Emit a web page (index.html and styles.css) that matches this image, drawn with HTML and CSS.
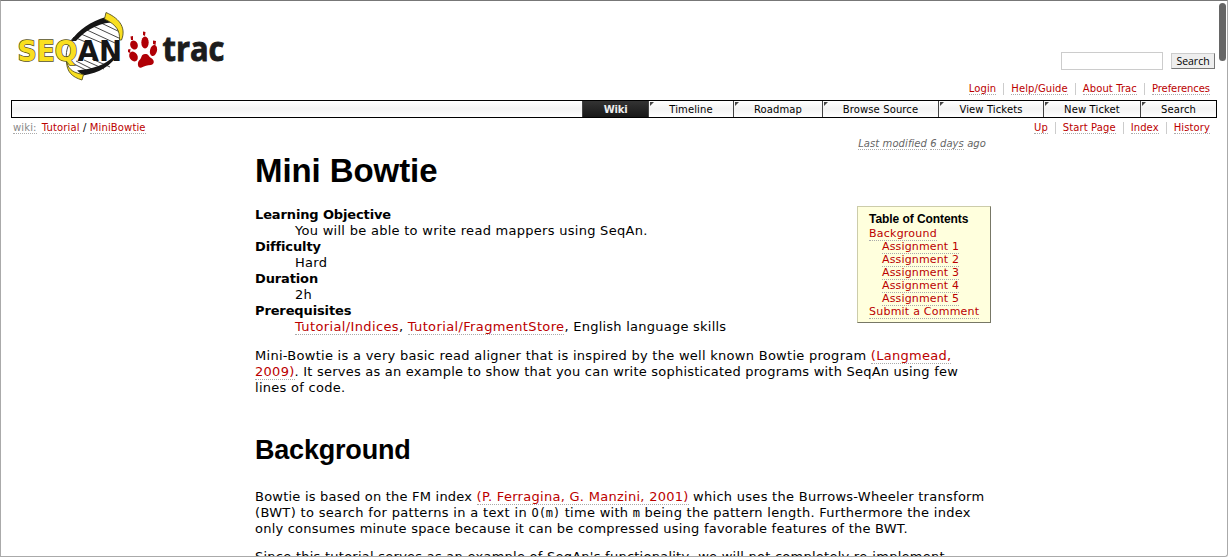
FILE: index.html
```html
<!DOCTYPE html>
<html lang="en">
<head>
<meta charset="utf-8">
<title>Mini Bowtie</title>
<link rel="stylesheet" href="styles.css">
</head>
<body>
<div class="window">
  <header class="header">
    <svg class="logo" width="210" height="72" viewBox="16 10 210 72" role="img" aria-label="SeqAn trac">
      <g stroke="#333" stroke-width=".9" fill="none">
        <path d="M99 22L120 32M93 26L121 39M87 30L115 43M81 34L102 43M76 38L88 43M84 60L104 69M76 61L96 71M70 62L86 70M92 59L110 67"/>
        <path d="M74 37C67 44 65 54 67 62"/>
      </g>
      <path d="M106 17C91 21 78 30 71 41L76 41C84 32 95 24 111 22.500Z" fill="#161616"/>
      <path d="M77 70.500C92 69 105 65 113 57L119 52C112 66 99 73 83 75.500Z" fill="#161616"/>
      <path d="M106 12.500C121 19 126 29 121.500 40L119.500 40C120 31 117 25 104.500 19Z" fill="#f9df20" stroke="#555020" stroke-width=".9"/>
      <path d="M67 63C69 70 74 73 83.500 74.500L82 80C72 77 67 72 66.500 62Z" fill="#f9df20" stroke="#555020" stroke-width=".9"/>
      <text class="seq" x="17.500" y="61" textLength="60" lengthAdjust="spacingAndGlyphs">SEQ</text>
      <text class="an" x="77.500" y="61" textLength="44.500" lengthAdjust="spacingAndGlyphs">AN</text>
      <g fill="#b00006">
        <ellipse cx="134" cy="45" rx="3.700" ry="4.700" transform="rotate(-22 134 45)"/>
        <ellipse cx="145" cy="42.500" rx="3.700" ry="6"/>
        <ellipse cx="153.500" cy="50.500" rx="3.500" ry="5.600" transform="rotate(14 153.500 50.500)"/>
        <ellipse cx="133.500" cy="56.500" rx="4" ry="5.200" transform="rotate(-30 133.500 56.500)"/>
        <path d="M145 54C141 54 142 58 139.500 60C136.500 63 138 69 141.500 67.500C145 66 147 65 151 65C155 64 154.500 60 151 58C148 56 149 54 145 54Z"/>
        <path d="M130.500 36.500L133 36L133 40L131 40ZM143 31.500L145.500 32L145 36L143 35ZM153 40.500L156 41L155.500 45L153 44ZM128 49.500L130.500 49L130 53L128 52Z"/>
      </g>
      <text class="trac" x="162.500" y="61" textLength="62" lengthAdjust="spacingAndGlyphs">trac</text>
    </svg>
    <form class="search">
      <input class="search-field" type="text" aria-label="Search">
      <button class="search-button" type="button">Search</button>
    </form>
    <ul class="links meta">
      <li><a>Login</a></li><li><a>Help/Guide</a></li><li><a>About Trac</a></li><li class="prefs"><a>Preferences</a></li>
    </ul>
  </header>
  <nav class="mainnav">
    <a class="tab active">Wiki</a><a class="tab timeline">Timeline</a><a class="tab roadmap">Roadmap</a><a class="tab browse">Browse Source</a><a class="tab tickets">View Tickets</a><a class="tab new">New Ticket</a><a class="tab find">Search</a>
  </nav>
  <div class="context">
    <div class="path"><a class="first">wiki:</a> <a>Tutorial</a> / <a>MiniBowtie</a></div>
    <ul class="links">
      <li><a>Up</a></li><li><a>Start Page</a></li><li><a>Index</a></li><li><a>History</a></li>
    </ul>
  </div>
  <main class="content">
    <div class="modified"><a>Last modified</a> <a>6 days</a> ago</div>
    <h1>Mini Bowtie</h1>
    <div class="intro">
      <dl>
        <dt>Learning Objective</dt><dd>You will be able to write read mappers using SeqAn.</dd>
        <dt>Difficulty</dt><dd>Hard</dd>
        <dt>Duration</dt><dd>2h</dd>
        <dt>Prerequisites</dt><dd class="wide"><a>Tutorial/Indices</a>, <a>Tutorial/FragmentStore</a>, English language skills</dd>
      </dl>
      <aside class="toc">
        <h4>Table of Contents</h4>
        <ul>
          <li><a>Background</a></li>
          <li class="sub"><a>Assignment 1</a></li>
          <li class="sub"><a>Assignment 2</a></li>
          <li class="sub"><a>Assignment 3</a></li>
          <li class="sub"><a>Assignment 4</a></li>
          <li class="sub"><a>Assignment 5</a></li>
          <li><a>Submit a Comment</a></li>
        </ul>
      </aside>
    </div>
    <p class="summary">Mini-Bowtie is a very basic read aligner that is inspired by the well known Bowtie program <a>(Langmead,<br>2009)</a><span class="snug">. It serves as an example to show that you can write sophisticated programs with SeqAn using few</span><br>lines of code.</p>
    <h2>Background</h2>
    <p><span class="snug">Bowtie is based on the FM index </span><a>(P. Ferragina, G. Manzini, 2001)</a> which uses the Burrows-Wheeler transform<br><span class="open">(BWT) to search for patterns in a text in </span><code>O(m)</code> time with <code>m</code> being the pattern length. Furthermore the index<br><span class="snug">only consumes minute space because it can be compressed using favorable features of the BWT.</span></p>
    <p class="last">Since this tutorial serves as an example of SeqAn's functionality, we will not completely re-implement</p>
  </main>
  <div class="scrollbar"></div>
</div>
</body>
</html>
```
FILE: styles.css
```css
* { box-sizing: border-box; }
body { margin: 0; background: #fff; color: #000; font-family: Verdana, "DejaVu Sans", sans-serif; font-size: 13px; }
.window { position: relative; height: 557px; overflow: hidden; padding: 0 10px; border: 1px solid #aaa; border-top-color: #777; border-radius: 0 0 3px 0; }
a { color: #b00; border-bottom: 1px dotted #aaa; }
ul { list-style: none; margin: 0; padding: 0; }

.header { display: grid; grid-template-columns: 1fr auto; grid-template-rows: 80px 19px; height: 99px; }
.logo { margin: 9px 0 0 5px; overflow: visible; }
.seq, .an { font: bold 29px "DejaVu Sans", sans-serif; }
.seq { fill: #f9df20; stroke: #555020; stroke-width: 1.5px; paint-order: stroke; }
.an { fill: #161616; }
.trac { font: bold 34px "Open Sans", "Noto Sans", sans-serif; fill: #1c1c1c; stroke: #1c1c1c; stroke-width: .9px; }
.search { display: flex; gap: 8px; margin: 51px 2px 0 0; justify-self: end; }
.search-field { width: 102px; height: 18px; padding: 0; border: 1px solid #ccc; }
.search-button { width: 44px; height: 16px; margin-top: 1px; padding: 0; background: #eee; border: 1px solid; border-color: #ccc #777 #777 #ccc; color: #000; font: 10.500px/13px "Open Sans", sans-serif; }
.links { display: flex; font-size: 10px; line-height: 12px; letter-spacing: .1px; }
.links li { padding: 0 7px; border-left: 1px solid #ccc; height: 12px; white-space: nowrap; }
.links li:first-child { border-left: 0; }
.meta { grid-column: 2; justify-self: end; margin-top: 2px; }
.links .prefs { letter-spacing: -.07px; }

.mainnav { display: flex; justify-content: flex-end; height: 18px; width: 1206px; border: 1px solid #000; background: linear-gradient(#fff, #f3f3f3 50%, #fff); }
.tab { position: relative; flex: none; height: 16px; border: 0; border-left: 1px solid #444; color: #000; font-size: 10px; line-height: 17px; text-align: center; letter-spacing: .12px; }
.tab::before { content: ""; position: absolute; left: 1px; top: 1px; border-top: 4px solid #444; border-right: 4px solid transparent; }
.active { width: 66px; background: linear-gradient(#333, #181818); color: #eee; font-weight: bold; letter-spacing: -.2px; }
.active::before { display: none; }
.timeline { width: 85px; }
.roadmap { width: 89px; }
.browse { width: 116px; }
.tickets { width: 105px; }
.new { width: 97px; }
.find { width: 76px; }

.context { display: flex; justify-content: space-between; padding-top: 4px; height: 20px; font-size: 10px; line-height: 12px; }
.path { padding-left: 2px; letter-spacing: .13px; }
.path .first { color: #888; margin-right: 2px; }

.content { width: 736px; margin-left: 244px; white-space: nowrap; letter-spacing: .28px; }
.modified { height: 13px; padding-right: 5px; color: #666; font: italic 10px/12px Verdana, "DejaVu Sans", sans-serif; letter-spacing: .08px; text-align: right; }
.modified a { color: inherit; }
h1, h2, h4 { margin: 0; font-family: Arial, "Liberation Sans", sans-serif; }
h1 { font-size: 33px; line-height: 40px; height: 55px; letter-spacing: -.08px; }
h2 { margin-top: 37px; font-size: 27px; line-height: 34px; height: 56px; letter-spacing: -.2px; }
.intro { display: flex; justify-content: space-between; align-items: flex-start; }
dl { margin: 1px 0 0; line-height: 16px; }
dt { font-weight: bold; letter-spacing: -.13px; }
dd { margin-left: 40px; }
.wide { letter-spacing: .24px; }
.wide a { letter-spacing: .37px; }
.snug { letter-spacing: .22px; }
.open { letter-spacing: .33px; }
.last { letter-spacing: .25px; }
.toc { width: 134px; height: 117px; padding: 5px 0 0 11px; background: #ffd; border: 1px solid; border-color: #cca #776 #776 #cca; }
.toc h4 { font-size: 12px; line-height: 15px; letter-spacing: -.06px; }
.toc ul { font-size: 11px; line-height: 13px; letter-spacing: .23px; }
.toc .sub { padding-left: 13px; letter-spacing: .15px; }
p { margin: 0 0 12px; line-height: 16px; }
.summary { margin-top: 13px; }
code { font: 12px/12px "DejaVu Sans Mono", monospace; letter-spacing: 0; }
.scrollbar { position: absolute; right: 1px; top: 2px; width: 7px; height: 58px; border-radius: 4px; background: #666; }
```
